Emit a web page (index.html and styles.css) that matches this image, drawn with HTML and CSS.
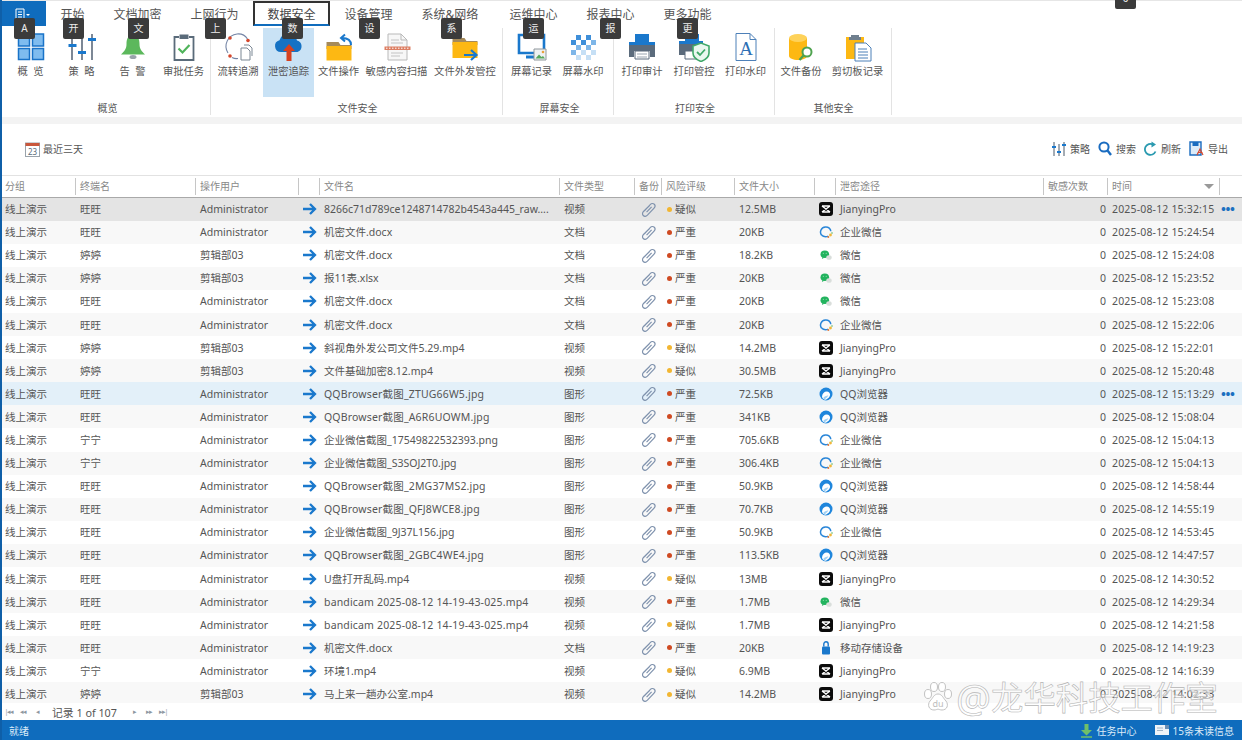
FILE: index.html
```html
<!DOCTYPE html>
<html lang="zh-CN">
<head>
<meta charset="utf-8">
<title>数据安全 - 泄密追踪</title>
<link rel="stylesheet" href="styles.css">
</head>
<body>
<svg class="defs" width="0" height="0" aria-hidden="true">
  <symbol id="i-arrow" viewBox="0 0 14 12"><path d="M0 6h11.5M7 1l5 5-5 5" fill="none" stroke="#1a78cc" stroke-width="2.3"/></symbol>
  <symbol id="i-clip" viewBox="0 0 14 14"><path d="M3.2 8.2 8.6 2.4c1.2-1.3 2.9-1.2 3.8-.3s.9 2.4-.2 3.6L6 12.3c-1.2 1.2-3 1.2-3.9.3s-1-2.5.2-3.7L8 3.3M5.2 9.5 9.9 4.6" fill="none" stroke="#7f92ad" stroke-width="1.1"/></symbol>
  <symbol id="i-jy" viewBox="0 0 14 14"><rect width="14" height="14" rx="3" fill="#0b0b0b"/><path d="M3 4l8 6M11 4l-8 6M3 4h8M3 10h8" fill="none" stroke="#fff" stroke-width="1.4"/></symbol>
  <symbol id="i-wework" viewBox="0 0 14 14"><path d="M2.6 10.2C.4 7.4 1.600 2.300 6.500 2c3-.2 5.200 1.800 5.300 4.300" fill="none" stroke="#2a86d8" stroke-width="1.500"/><path d="M2.600 10.200c1.700 1.400 4.200 1.900 6.700.9" fill="none" stroke="#2a86d8" stroke-width="1.500"/><circle cx="11.500" cy="10" r="1.400" fill="#f0b73a"/><circle cx="9.300" cy="12" r="1" fill="#e27a3a"/><circle cx="13" cy="8" r=".8" fill="#5bb75b"/></symbol>
  <symbol id="i-wechat" viewBox="0 0 14 14"><ellipse cx="5.800" cy="6.200" rx="4.300" ry="3.800" fill="#22b35e"/><path d="M3.500 9l-.6 2 2.300-1.200z" fill="#22b35e"/><ellipse cx="10" cy="9.500" rx="2.700" ry="2.300" fill="#d9dedb"/><circle cx="4.300" cy="5.300" r=".5" fill="#b8ecc9"/><circle cx="7.200" cy="5.300" r=".5" fill="#b8ecc9"/></symbol>
  <symbol id="i-qqb" viewBox="0 0 14 14"><circle cx="7" cy="7" r="6.500" fill="#1f86dc"/><path d="M3 9.500c.2-3 2.200-5 4.800-5 1.900 0 3.300 1.300 3.300 3.300 0 2.300-2.400 3.700-4.200 5C4.800 12.600 3 11.400 3 9.500z" fill="#fff"/><path d="M4.200 11c.9-1.900 3-2.200 5.200-2.800-1 2.100-2.600 3.400-4 4z" fill="#9fd0f3"/></symbol>
  <symbol id="i-usb" viewBox="0 0 14 14"><rect x="3" y="5.500" width="8" height="8" rx="1" fill="#1a78cc"/><path d="M4.800 5.500V3a2.200 2.200 0 0 1 4.400 0v2.500" fill="none" stroke="#1a78cc" stroke-width="1.400"/></symbol>
</svg>

<div class="app">
  <nav class="tabs">
    <div class="file-tab">
      <svg width="16" height="12" viewBox="0 0 16 12"><path d="M1 1h8v10H1zM3 4h4M3 6.500h4M3 9h4" fill="none" stroke="#fff" stroke-width="1"/><path d="M11 6l2 2 2-2z" fill="#fff"/></svg>
    </div>
    <span class="tab">开始</span>
    <span class="tab">文档加密</span>
    <span class="tab">上网行为</span>
    <span class="tab active">数据安全</span>
    <span class="tab">设备管理</span>
    <span class="tab tab-net">系统&amp;网络</span>
    <span class="tab">运维中心</span>
    <span class="tab">报表中心</span>
    <span class="tab">更多功能</span>
  </nav>

  <section class="ribbon">
    <div class="group g1">
      <div class="items">
        <div class="item w51">
          <svg class="ico" viewBox="0 0 32 30"><g fill="#7fbcef" stroke="#1a73c8" stroke-width="1.500"><rect x="3.500" y="2" width="11" height="12"/><rect x="17.500" y="2" width="11" height="12"/><rect x="3.500" y="16.500" width="11" height="11"/><rect x="17.500" y="16.500" width="11" height="11"/></g></svg>
          <span>概&nbsp;&nbsp;览</span>
        </div>
        <div class="item w51">
          <svg class="ico" viewBox="0 0 32 30"><path d="M6 4v24M16 4v24M26 2v26" stroke="#46566a" stroke-width="1.400"/><path d="M2.500 12h8v3h-8zM12 19h8v3h-8zM22 6h8v3h-8z" fill="#1a78cc"/></svg>
          <span>策&nbsp;&nbsp;略</span>
        </div>
        <div class="item w51">
          <svg class="ico" viewBox="0 0 32 30"><path d="M16 3c5 0 6.500 4 6.500 9 0 5 2 7 5.500 10.500H4C7.500 19 9.500 17 9.500 12c0-5 1.500-9 6.500-9z" fill="#5cb85c"/><ellipse cx="16" cy="25" rx="3.500" ry="2" fill="#9aa3ab"/></svg>
          <span>告&nbsp;&nbsp;警</span>
        </div>
        <div class="item w51">
          <svg class="ico" viewBox="0 0 32 30"><path d="M11 5H6.500v23h19V5H21" fill="none" stroke="#5a6b7a" stroke-width="1.800"/><path d="M11.500 2.500h9V7h-9z" fill="#5a6b7a"/><path d="M10.500 16.500l4 4 7-7.500" fill="none" stroke="#4fb35a" stroke-width="2.200"/></svg>
          <span>审批任务</span>
        </div>
      </div>
      <div class="group-label">概览</div>
    </div>

    <div class="group g2">
      <div class="items">
        <div class="item w50">
          <svg class="ico" viewBox="0 0 32 30"><path d="M6 21C1 13 6 3 15 2c4-.4 8 1 10.500 5M10 25.500c2 1 4 1.300 6 1" fill="none" stroke="#7485a6" stroke-width="1.100"/><circle cx="8" cy="6" r="1.800" fill="#d5462b"/><circle cx="26" cy="8.500" r="1.800" fill="#d5462b"/><circle cx="8" cy="24" r="1.800" fill="#d5462b"/><path d="M19 16h6l3 3v9h-9z" fill="#fff" stroke="#7b8794"/><path d="M22 13h5l3 3v8" fill="none" stroke="#7b8794"/></svg>
          <span>流转追溯</span>
        </div>
        <div class="item w51 selected">
          <svg class="ico" viewBox="0 0 32 30"><path d="M8 20a6 6 0 0 1-1.500-11.800A9 9 0 0 1 24 8.500 6 6 0 0 1 24.500 20z" fill="#1572c4"/><path d="M16 12l6 7h-3.500v10h-5V19H10z" fill="#d6401f"/></svg>
          <span>泄密追踪</span>
        </div>
        <div class="item w49">
          <svg class="ico" viewBox="0 0 32 30"><path d="M3.500 10h12l2 3h11v4h-25z" fill="#a58a5a"/><path d="M3.500 14h25v14.500h-25z" fill="#fdb813"/><path d="M28 13c0-5-3-7-9-7M22 2.500 18 6l4 3.500" fill="none" stroke="#1a78cc" stroke-width="2"/></svg>
          <span>文件操作</span>
        </div>
        <div class="item w67">
          <svg class="ico" viewBox="0 0 32 30"><path d="M7 2h13l6 6v20H7z" fill="#f7f7f7" stroke="#b9b9b9"/><path d="M20 2v6h6" fill="none" stroke="#b9b9b9"/><path d="M10 8h8M10 11h12M10 21h12M10 24h9" stroke="#c4c4c4" stroke-width="1.200"/><path d="M3.500 14.500h26v3.500h-26z" fill="#dd7f63"/><path d="M5 16.200h23" stroke="#fff" stroke-dasharray="1.500 1.500"/></svg>
          <span>敏感内容扫描</span>
        </div>
        <div class="item w70">
          <svg class="ico" viewBox="0 0 32 30"><path d="M3.500 6h12l2 3h11v4h-25z" fill="#a58a5a"/><path d="M3.500 10h25v16h-25z" fill="#fdb813"/><path d="M15 23h12M22 18l5.500 5-5.500 5" fill="none" stroke="#1a78cc" stroke-width="2.200"/></svg>
          <span>文件外发管控</span>
        </div>
      </div>
      <div class="group-label">文件安全</div>
    </div>

    <div class="group g3">
      <div class="items">
        <div class="item w51">
          <svg class="ico" viewBox="0 0 32 30"><path d="M3 3h25v18H3z" fill="#fff" stroke="#1a78cc" stroke-width="2.600"/><path d="M10 25h10" stroke="#1a78cc" stroke-width="3"/><path d="M18 17h12v11H18z" fill="#eef1f2" stroke="#8f979c"/><path d="M19.500 26.500l3.500-4 2.500 2.500 1.500-1 2 2.500z" fill="#57a85c"/><circle cx="27" cy="20" r="1.300" fill="#e9a23b"/></svg>
          <span>屏幕记录</span>
        </div>
        <div class="item w52">
          <svg class="ico" viewBox="0 0 32 30"><g fill="#3f8fd9"><path d="M9 3h5v5H9zM19 3h5v5h-5zM4 8h5v5H4zM14 8h5v5h-5z"/></g><g fill="#7eb6e8"><path d="M24 8h5v5h-5zM9 13h5v5H9zM19 13h5v5h-5zM4 18h5v5H4z"/></g><g fill="#c5dff5"><path d="M14 18h5v5h-5zM24 18h5v5h-5zM9 23h5v5H9zM19 23h5v5h-5z"/></g></svg>
          <span>屏幕水印</span>
        </div>
      </div>
      <div class="group-label">屏幕安全</div>
    </div>

    <div class="group g4">
      <div class="items">
        <div class="item w52">
          <svg class="ico" viewBox="0 0 32 30"><path d="M9 2h14v8H9z" fill="#1a78cc"/><path d="M3 11h26v14h-5v-6H8v6H3z" fill="#5b6b7c"/><path d="M3 10h26v3H3z" fill="#1a78cc"/><path d="M9 19h14v8H9z" fill="#fff" stroke="#5b6b7c"/><path d="M11 22h10M11 25h10" stroke="#9aa5b0"/></svg>
          <span>打印审计</span>
        </div>
        <div class="item w52">
          <svg class="ico" viewBox="0 0 32 30"><path d="M7 2h14v8H7z" fill="#1a78cc"/><path d="M1 10h24v13H1z" fill="#5b6b7c"/><path d="M1 9h24v3H1z" fill="#1a78cc"/><path d="M7 19h12v8H7z" fill="#fff" stroke="#5b6b7c"/><path d="M15 14l8-3 8 3v7c0 4.500-4 7-8 8.500-4-1.500-8-4-8-8.500z" fill="#e9f7ef" stroke="#3fa869" stroke-width="1.600"/><path d="M19 20l3 3 5-5.500" fill="none" stroke="#3fa869" stroke-width="1.800"/></svg>
          <span>打印管控</span>
        </div>
        <div class="item w51">
          <svg class="ico" viewBox="0 0 32 30"><path d="M6 1.500h14l6 6v21H6z" fill="#fff" stroke="#4d80b8"/><path d="M20 1.500v6h6" fill="none" stroke="#4d80b8"/><text x="16" y="23" class="doc-a">A</text></svg>
          <span>打印水印</span>
        </div>
      </div>
      <div class="group-label">打印安全</div>
    </div>

    <div class="group g5">
      <div class="items">
        <div class="item w50">
          <svg class="ico" viewBox="0 0 32 30"><path d="M4 6v18c0 2 4 4 9 4s9-2 9-4V6z" fill="#fdb813"/><ellipse cx="13" cy="6" rx="9" ry="4" fill="#fed25a"/><circle cx="22" cy="20" r="4.500" fill="#fff" stroke="#4fa34f" stroke-width="2"/><path d="M18.500 23.500 14.500 28" stroke="#4fa34f" stroke-width="2.400"/></svg>
          <span>文件备份</span>
        </div>
        <div class="item w63">
          <svg class="ico" viewBox="0 0 32 30"><path d="M4 5h18v22H4z" fill="#fdb813"/><path d="M9 3h8v2h2v3H7V5h2z" fill="#6f7f8e"/><path d="M13 11h11l5 5v13H13z" fill="#fff" stroke="#4d80b8"/><path d="M16 17h9M16 20h10M16 23h10M16 26h10" stroke="#4d80b8"/></svg>
          <span>剪切板记录</span>
        </div>
      </div>
      <div class="group-label">其他安全</div>
    </div>
  </section>

  <div class="strip"></div>

  <div class="toolbar">
    <div class="date">
      <svg width="15" height="16" viewBox="0 0 15 16"><rect x=".5" y="2" width="14" height="13.500" fill="#fff" stroke="#9aa3ab"/><path d="M.5 2h14v3H.5z" fill="#c9573c"/><text x="7.500" y="13.500" class="cal">23</text></svg>
      <span>最近三天</span>
    </div>
    <div class="tools">
      <div class="tool"><svg width="14" height="16" viewBox="0 0 14 16"><path d="M2 1v14M7 3v12M12 1v14" stroke="#4a5968"/><path d="M0 5h4v2H0zM5 10h4v2H5zM10 3h4v2h-4z" fill="#1a78cc"/></svg><span>策略</span></div>
      <div class="tool"><svg width="14" height="15" viewBox="0 0 14 15"><circle cx="6" cy="6" r="4.600" fill="none" stroke="#1a6cc0" stroke-width="2"/><path d="M9.500 9.500 13 14" stroke="#1a6cc0" stroke-width="2.400"/></svg><span>搜索</span></div>
      <div class="tool"><svg width="13" height="15" viewBox="0 0 13 15"><path d="M11.500 10.500A5.500 5.500 0 1 1 9 3.500" fill="none" stroke="#2a9ab0" stroke-width="1.800"/><path d="M7.500 0.500 12 3.500 7.500 6.500z" fill="#2a9ab0"/></svg><span>刷新</span></div>
      <div class="tool"><svg width="15" height="15" viewBox="0 0 15 15"><path d="M1 1h11v13H1z" fill="#dcebf8" stroke="#1a6cc0" stroke-width="1.400"/><path d="M3.500 1h6v4h-6z" fill="#1a6cc0"/><path d="M8 14l3-6 3 6M8.500 11.500h5" fill="none" stroke="#d5462b" stroke-width="1.200"/></svg><span>导出</span></div>
    </div>
  </div>

  <main class="grid">
    <div class="row head">
      <div class="hc">分组</div><div class="hc">终端名</div><div class="hc">操作用户</div><div class="hc"></div><div class="hc">文件名</div><div class="hc">文件类型</div><div class="hc">备份</div><div class="hc">风险评级</div><div class="hc">文件大小</div><div class="hc"></div><div class="hc">泄密途径</div><div class="hc">敏感次数</div><div class="hc sort">时间<i class="tri"></i></div>
    </div>
    <div class="rows">
      <div class="row sel"><span>线上演示</span><span>旺旺</span><span>Administrator</span><span class="mid"><svg class="ar"><use href="#i-arrow"/></svg></span><span>8266c71d789ce1248714782b4543a445_raw....</span><span>视频</span><span class="mid"><svg class="cl"><use href="#i-clip"/></svg></span><span class="risk"><i class="dot warn"></i>疑似</span><span>12.5MB</span><span class="mid"><svg class="src"><use href="#i-jy"/></svg></span><span>JianyingPro</span><span class="num">0</span><span class="lat">2025-08-12 15:32:15</span><span class="more">•••</span></div>
      <div class="row alt"><span>线上演示</span><span>旺旺</span><span>Administrator</span><span class="mid"><svg class="ar"><use href="#i-arrow"/></svg></span><span>机密文件.docx</span><span>文档</span><span class="mid"><svg class="cl"><use href="#i-clip"/></svg></span><span class="risk"><i class="dot high"></i>严重</span><span>20KB</span><span class="mid"><svg class="src"><use href="#i-wework"/></svg></span><span>企业微信</span><span class="num">0</span><span class="lat">2025-08-12 15:24:54</span><span></span></div>
      <div class="row"><span>线上演示</span><span>婷婷</span><span>剪辑部03</span><span class="mid"><svg class="ar"><use href="#i-arrow"/></svg></span><span>机密文件.docx</span><span>文档</span><span class="mid"><svg class="cl"><use href="#i-clip"/></svg></span><span class="risk"><i class="dot high"></i>严重</span><span>18.2KB</span><span class="mid"><svg class="src"><use href="#i-wechat"/></svg></span><span>微信</span><span class="num">0</span><span class="lat">2025-08-12 15:24:08</span><span></span></div>
      <div class="row alt"><span>线上演示</span><span>婷婷</span><span>剪辑部03</span><span class="mid"><svg class="ar"><use href="#i-arrow"/></svg></span><span>报11表.xlsx</span><span>文档</span><span class="mid"><svg class="cl"><use href="#i-clip"/></svg></span><span class="risk"><i class="dot high"></i>严重</span><span>20KB</span><span class="mid"><svg class="src"><use href="#i-wechat"/></svg></span><span>微信</span><span class="num">0</span><span class="lat">2025-08-12 15:23:52</span><span></span></div>
      <div class="row"><span>线上演示</span><span>旺旺</span><span>Administrator</span><span class="mid"><svg class="ar"><use href="#i-arrow"/></svg></span><span>机密文件.docx</span><span>文档</span><span class="mid"><svg class="cl"><use href="#i-clip"/></svg></span><span class="risk"><i class="dot high"></i>严重</span><span>20KB</span><span class="mid"><svg class="src"><use href="#i-wechat"/></svg></span><span>微信</span><span class="num">0</span><span class="lat">2025-08-12 15:23:08</span><span></span></div>
      <div class="row alt"><span>线上演示</span><span>旺旺</span><span>Administrator</span><span class="mid"><svg class="ar"><use href="#i-arrow"/></svg></span><span>机密文件.docx</span><span>文档</span><span class="mid"><svg class="cl"><use href="#i-clip"/></svg></span><span class="risk"><i class="dot high"></i>严重</span><span>20KB</span><span class="mid"><svg class="src"><use href="#i-wework"/></svg></span><span>企业微信</span><span class="num">0</span><span class="lat">2025-08-12 15:22:06</span><span></span></div>
      <div class="row"><span>线上演示</span><span>婷婷</span><span>剪辑部03</span><span class="mid"><svg class="ar"><use href="#i-arrow"/></svg></span><span>斜视角外发公司文件5.29.mp4</span><span>视频</span><span class="mid"><svg class="cl"><use href="#i-clip"/></svg></span><span class="risk"><i class="dot warn"></i>疑似</span><span>14.2MB</span><span class="mid"><svg class="src"><use href="#i-jy"/></svg></span><span>JianyingPro</span><span class="num">0</span><span class="lat">2025-08-12 15:22:01</span><span></span></div>
      <div class="row alt"><span>线上演示</span><span>婷婷</span><span>剪辑部03</span><span class="mid"><svg class="ar"><use href="#i-arrow"/></svg></span><span>文件基础加密8.12.mp4</span><span>视频</span><span class="mid"><svg class="cl"><use href="#i-clip"/></svg></span><span class="risk"><i class="dot warn"></i>疑似</span><span>30.5MB</span><span class="mid"><svg class="src"><use href="#i-jy"/></svg></span><span>JianyingPro</span><span class="num">0</span><span class="lat">2025-08-12 15:20:48</span><span></span></div>
      <div class="row hov"><span>线上演示</span><span>旺旺</span><span>Administrator</span><span class="mid"><svg class="ar"><use href="#i-arrow"/></svg></span><span class="lat">QQBrowser截图_ZTUG66W5.jpg</span><span>图形</span><span class="mid"><svg class="cl"><use href="#i-clip"/></svg></span><span class="risk"><i class="dot high"></i>严重</span><span>72.5KB</span><span class="mid"><svg class="src"><use href="#i-qqb"/></svg></span><span>QQ浏览器</span><span class="num">0</span><span class="lat">2025-08-12 15:13:29</span><span class="more">•••</span></div>
      <div class="row alt"><span>线上演示</span><span>旺旺</span><span>Administrator</span><span class="mid"><svg class="ar"><use href="#i-arrow"/></svg></span><span class="lat">QQBrowser截图_A6R6UOWM.jpg</span><span>图形</span><span class="mid"><svg class="cl"><use href="#i-clip"/></svg></span><span class="risk"><i class="dot high"></i>严重</span><span>341KB</span><span class="mid"><svg class="src"><use href="#i-qqb"/></svg></span><span>QQ浏览器</span><span class="num">0</span><span class="lat">2025-08-12 15:08:04</span><span></span></div>
      <div class="row"><span>线上演示</span><span>宁宁</span><span>Administrator</span><span class="mid"><svg class="ar"><use href="#i-arrow"/></svg></span><span>企业微信截图_17549822532393.png</span><span>图形</span><span class="mid"><svg class="cl"><use href="#i-clip"/></svg></span><span class="risk"><i class="dot high"></i>严重</span><span>705.6KB</span><span class="mid"><svg class="src"><use href="#i-wework"/></svg></span><span>企业微信</span><span class="num">0</span><span class="lat">2025-08-12 15:04:13</span><span></span></div>
      <div class="row alt"><span>线上演示</span><span>宁宁</span><span>Administrator</span><span class="mid"><svg class="ar"><use href="#i-arrow"/></svg></span><span>企业微信截图_S3SOJ2T0.jpg</span><span>图形</span><span class="mid"><svg class="cl"><use href="#i-clip"/></svg></span><span class="risk"><i class="dot high"></i>严重</span><span>306.4KB</span><span class="mid"><svg class="src"><use href="#i-wework"/></svg></span><span>企业微信</span><span class="num">0</span><span class="lat">2025-08-12 15:04:13</span><span></span></div>
      <div class="row"><span>线上演示</span><span>旺旺</span><span>Administrator</span><span class="mid"><svg class="ar"><use href="#i-arrow"/></svg></span><span class="lat">QQBrowser截图_2MG37MS2.jpg</span><span>图形</span><span class="mid"><svg class="cl"><use href="#i-clip"/></svg></span><span class="risk"><i class="dot high"></i>严重</span><span>50.9KB</span><span class="mid"><svg class="src"><use href="#i-qqb"/></svg></span><span>QQ浏览器</span><span class="num">0</span><span class="lat">2025-08-12 14:58:44</span><span></span></div>
      <div class="row alt"><span>线上演示</span><span>旺旺</span><span>Administrator</span><span class="mid"><svg class="ar"><use href="#i-arrow"/></svg></span><span class="lat">QQBrowser截图_QFJ8WCE8.jpg</span><span>图形</span><span class="mid"><svg class="cl"><use href="#i-clip"/></svg></span><span class="risk"><i class="dot high"></i>严重</span><span>70.7KB</span><span class="mid"><svg class="src"><use href="#i-qqb"/></svg></span><span>QQ浏览器</span><span class="num">0</span><span class="lat">2025-08-12 14:55:19</span><span></span></div>
      <div class="row"><span>线上演示</span><span>旺旺</span><span>Administrator</span><span class="mid"><svg class="ar"><use href="#i-arrow"/></svg></span><span>企业微信截图_9J37L156.jpg</span><span>图形</span><span class="mid"><svg class="cl"><use href="#i-clip"/></svg></span><span class="risk"><i class="dot high"></i>严重</span><span>50.9KB</span><span class="mid"><svg class="src"><use href="#i-wework"/></svg></span><span>企业微信</span><span class="num">0</span><span class="lat">2025-08-12 14:53:45</span><span></span></div>
      <div class="row alt"><span>线上演示</span><span>旺旺</span><span>Administrator</span><span class="mid"><svg class="ar"><use href="#i-arrow"/></svg></span><span class="lat">QQBrowser截图_2GBC4WE4.jpg</span><span>图形</span><span class="mid"><svg class="cl"><use href="#i-clip"/></svg></span><span class="risk"><i class="dot high"></i>严重</span><span>113.5KB</span><span class="mid"><svg class="src"><use href="#i-qqb"/></svg></span><span>QQ浏览器</span><span class="num">0</span><span class="lat">2025-08-12 14:47:57</span><span></span></div>
      <div class="row"><span>线上演示</span><span>旺旺</span><span>Administrator</span><span class="mid"><svg class="ar"><use href="#i-arrow"/></svg></span><span>U盘打开乱码.mp4</span><span>视频</span><span class="mid"><svg class="cl"><use href="#i-clip"/></svg></span><span class="risk"><i class="dot warn"></i>疑似</span><span>13MB</span><span class="mid"><svg class="src"><use href="#i-jy"/></svg></span><span>JianyingPro</span><span class="num">0</span><span class="lat">2025-08-12 14:30:52</span><span></span></div>
      <div class="row alt"><span>线上演示</span><span>旺旺</span><span>Administrator</span><span class="mid"><svg class="ar"><use href="#i-arrow"/></svg></span><span class="lat">bandicam 2025-08-12 14-19-43-025.mp4</span><span>视频</span><span class="mid"><svg class="cl"><use href="#i-clip"/></svg></span><span class="risk"><i class="dot high"></i>严重</span><span>1.7MB</span><span class="mid"><svg class="src"><use href="#i-wechat"/></svg></span><span>微信</span><span class="num">0</span><span class="lat">2025-08-12 14:29:34</span><span></span></div>
      <div class="row"><span>线上演示</span><span>旺旺</span><span>Administrator</span><span class="mid"><svg class="ar"><use href="#i-arrow"/></svg></span><span class="lat">bandicam 2025-08-12 14-19-43-025.mp4</span><span>视频</span><span class="mid"><svg class="cl"><use href="#i-clip"/></svg></span><span class="risk"><i class="dot warn"></i>疑似</span><span>1.7MB</span><span class="mid"><svg class="src"><use href="#i-jy"/></svg></span><span>JianyingPro</span><span class="num">0</span><span class="lat">2025-08-12 14:21:58</span><span></span></div>
      <div class="row alt"><span>线上演示</span><span>旺旺</span><span>Administrator</span><span class="mid"><svg class="ar"><use href="#i-arrow"/></svg></span><span>机密文件.docx</span><span>文档</span><span class="mid"><svg class="cl"><use href="#i-clip"/></svg></span><span class="risk"><i class="dot high"></i>严重</span><span>20KB</span><span class="mid"><svg class="src"><use href="#i-usb"/></svg></span><span>移动存储设备</span><span class="num">0</span><span class="lat">2025-08-12 14:19:23</span><span></span></div>
      <div class="row"><span>线上演示</span><span>宁宁</span><span>Administrator</span><span class="mid"><svg class="ar"><use href="#i-arrow"/></svg></span><span>环境1.mp4</span><span>视频</span><span class="mid"><svg class="cl"><use href="#i-clip"/></svg></span><span class="risk"><i class="dot warn"></i>疑似</span><span>6.9MB</span><span class="mid"><svg class="src"><use href="#i-jy"/></svg></span><span>JianyingPro</span><span class="num">0</span><span class="lat">2025-08-12 14:16:39</span><span></span></div>
      <div class="row alt"><span>线上演示</span><span>婷婷</span><span>剪辑部03</span><span class="mid"><svg class="ar"><use href="#i-arrow"/></svg></span><span>马上来一趟办公室.mp4</span><span>视频</span><span class="mid"><svg class="cl"><use href="#i-clip"/></svg></span><span class="risk"><i class="dot warn"></i>疑似</span><span>14.2MB</span><span class="mid"><svg class="src"><use href="#i-jy"/></svg></span><span>JianyingPro</span><span class="num">0</span><span class="lat">2025-08-12 14:02:33</span><span></span></div>
    </div>
  </main>

  <div class="pager">
    <span class="nav">|◂◂</span><span class="nav">◂◂</span><span class="nav">◂</span>
    <span class="rec">记录 1 of 107</span>
    <span class="nav">▸</span><span class="nav">▸▸</span><span class="nav">▸▸|</span>
  </div>

  <footer class="status">
    <span>就绪</span>
    <div class="status-right">
      <svg width="13" height="15" viewBox="0 0 13 15"><path d="M4.500 1h4v6H12l-5.500 5.500L1 7h3.500z" fill="#6fbf6a"/><path d="M1 14h11" stroke="#6fbf6a" stroke-width="1.500"/></svg>
      <span class="task">任务中心</span>
      <svg width="14" height="10" viewBox="0 0 14 10"><rect width="14" height="10" fill="#eef3f8"/><path d="M10 0h4v4h-4z" fill="#6b8fb5"/><path d="M2 3h6M2 5.500h6" stroke="#9fb2c6"/></svg>
      <span>15条未读信息</span>
    </div>
  </footer>

  <div class="keytip k-a">A</div>
  <div class="keytip k-kai">开</div>
  <div class="keytip k-wen">文</div>
  <div class="keytip k-shang">上</div>
  <div class="keytip k-shu">数</div>
  <div class="keytip k-she">设</div>
  <div class="keytip k-xi">系</div>
  <div class="keytip k-yun">运</div>
  <div class="keytip k-bao">报</div>
  <div class="keytip k-geng">更</div>
  <div class="keytip k-zero">0</div>

  <div class="watermark">
    <svg width="32" height="32" viewBox="0 0 32 32"><g fill="#fff" stroke="#c2c2c2" stroke-width="1"><ellipse cx="6" cy="13" rx="3.500" ry="4.500"/><ellipse cx="12" cy="6" rx="3.500" ry="4.500"/><ellipse cx="20" cy="6" rx="3.500" ry="4.500"/><ellipse cx="26" cy="13" rx="3.500" ry="4.500"/><path d="M16 13c4 0 5 4 8 7 3 4 1 9-4 9-2 0-3-.8-4-.8s-2 .8-4 .8c-5 0-7-5-4-9 3-3 4-7 8-7z"/></g><text x="16" y="26" class="du">du</text></svg>
    <span class="wm-text"><span class="wm-at">@</span>龙华科技工作室</span>
  </div>
</div>
</body>
</html>
```
FILE: styles.css
```css
* { box-sizing: border-box; }
html, body { margin: 0; height: 100%; overflow: hidden; background: #fff; }
body { font-family: "Noto Sans", "Noto Sans CJK SC", sans-serif; font-size: 10.5px; color: #555; }
.defs { position: absolute; }

.app { position: relative; width: 1242px; height: 740px; display: flex; flex-direction: column; border-left: 2px solid #0f5fa8; overflow: hidden; }

/* tabs */
.tabs { height: 26px; display: flex; align-items: stretch; background: #fff; border-top: 1px solid #e6e6e6; margin-left: -2px; flex: none; }
.file-tab { width: 46px; height: 25px; background: #0f6cbd; display: flex; align-items: center; justify-content: center; }
.tab { padding: 0 14.5px; font-size: 12px; color: #555; line-height: 27px; height: 25px; white-space: nowrap; }
.tab.active { border: 2px solid #333; border-bottom-color: #0f6cbd; padding: 0 12.5px; line-height: 24px; color: #444; }
.tab-net { padding-right: 16.5px; }

/* ribbon */
.ribbon { height: 91px; display: flex; flex: none; padding-top: 2px; background: #fff; }
.group { display: flex; flex-direction: column; border-right: 1px solid #e3e3e3; height: 87px; }
.g1 { width: 209px; padding-left: 3px; }
.g2 { width: 292px; padding-left: 2px; }
.g3 { width: 111px; padding-left: 3px; }
.g4 { width: 161px; padding-left: 2px; }
.g5 { width: 117px; padding-left: 1px; }
.items { display: flex; height: 69px; flex: none; }
.item { display: flex; flex-direction: column; align-items: center; font-size: 10.3px; color: #555; padding-top: 4px; white-space: nowrap; }
.item span { line-height: 14px; margin-top: 2px; }
.ico { width: 32px; height: 30px; }
.w49 { width: 49px; } .w50 { width: 50px; } .w51 { width: 51px; } .w52 { width: 52px; } .w63 { width: 63px; } .w67 { width: 67px; } .w70 { width: 70px; }
.selected { background: #c9e2f5; }
.group-label { text-align: center; font-size: 10px; line-height: 14px; margin-top: 4px; color: #555; }
.doc-a { font-family: "Liberation Serif", serif; font-size: 19px; fill: #2d6fb5; text-anchor: middle; }

.strip { height: 7px; background: #f3f3f3; flex: none; }

/* toolbar */
.toolbar { height: 51px; flex: none; display: flex; align-items: center; justify-content: space-between; padding: 0 14px 2px 23px; }
.date { display: flex; align-items: center; gap: 3px; font-size: 10px; color: #555; }
.cal { font-family: "Noto Sans", sans-serif; font-size: 8px; fill: #5a6b7a; text-anchor: middle; }
.tools { display: flex; gap: 8px; font-size: 10px; color: #555; }
.tool { display: flex; align-items: center; gap: 4px; }

/* table */
.grid { flex: 1; min-height: 0; display: flex; flex-direction: column; overflow: hidden; }
.rows { flex: 1; min-height: 0; overflow: hidden; }
.row { display: grid; grid-template-columns: 74px 120px 103px 21px 240px 75px 27px 73px 80px 21px 208px 64px 112px 22px; height: 23.1px; align-items: center; }
.row > span { padding-left: 4px; white-space: nowrap; overflow: hidden; line-height: 14px; }
.row > span:first-child { padding-left: 3px; }
.row > span.lat { letter-spacing: .17px; }
.row > span.mid { padding: 0; display: flex; justify-content: center; align-items: center; overflow: visible; }
.row > span.num { padding: 0 2px 0 0; text-align: right; }
.row > span.more { padding: 0 0 0 1px; color: #1a6fc0; font-size: 13px; font-weight: 700; letter-spacing: -.4px; overflow: visible; }
.row > span.risk { display: flex; align-items: center; padding-left: 5px; }
.head { height: 22.5px; border-top: 1px solid #e2e2e2; border-bottom: 1px solid #a9a9a9; flex: none; color: #888; font-size: 10px; }
.hc { height: 17px; line-height: 17px; padding-left: 4px; border-right: 1px solid #c6c6c6; white-space: nowrap; }
.hc:first-child { padding-left: 3px; }
.hc:last-child { grid-column: 13; }
.sort { display: flex; align-items: center; justify-content: space-between; padding-right: 5px; }
.tri { width: 0; height: 0; border: 5px solid transparent; border-top: 5px solid #999; border-bottom: 0; }
.alt { background: #f8f8f8; }
.sel { background: #e4e4e4; }
.hov { background: #e3f0f9; }
.dot { width: 5px; height: 5px; border-radius: 50%; margin-right: 3px; flex: none; }
.warn { background: #f2b632; }
.high { background: #cf4a22; }
.ar { width: 14px; height: 12px; }
.cl { width: 15px; height: 15px; }
.src { width: 14px; height: 14px; }

/* pager */
.pager { height: 17px; flex: none; display: flex; align-items: center; background: #fff; color: #8e979f; }
.nav { font-size: 7px; width: 14px; text-align: center; letter-spacing: -1px; }
.rec { font-size: 10.8px; color: #555; margin: 0 11px 0 8px; }

/* status bar */
.status { height: 20px; flex: none; margin-left: -2px; background: #0f6cbd; color: #dcebf8; font-size: 10px; display: flex; align-items: center; justify-content: space-between; padding: 0 8px 0 9px; }
.status-right { display: flex; align-items: center; gap: 4px; }
.task { margin-right: 14px; }

/* overlays */
.keytip { position: absolute; top: 18px; width: 21px; height: 21px; background: #3b3b3b; color: #eee; border-radius: 2px; font-size: 10px; line-height: 21px; text-align: center; }
.k-a { left: 12px; } .k-kai { left: 61px; } .k-wen { left: 126px; } .k-shang { left: 203px; } .k-shu { left: 280px; }
.k-she { left: 357px; } .k-xi { left: 439px; } .k-yun { left: 521px; } .k-bao { left: 598px; } .k-geng { left: 675px; }
.k-zero { left: 1113px; top: -12px; }

.watermark { position: absolute; left: 920px; top: 679px; display: flex; align-items: center; gap: 2px; font-size: 32.4px; line-height: 36px; color: rgba(255, 255, 255, .55); -webkit-text-stroke: .6px #b4b4b4; white-space: nowrap; }
.wm-text { display: flex; align-items: center; }
.wm-at { font-size: 39px; line-height: 36px; width: 35px; }
.du { font-family: "Noto Sans", sans-serif; font-size: 9px; fill: #bdbdbd; stroke: none; text-anchor: middle; -webkit-text-stroke: 0; }
```
